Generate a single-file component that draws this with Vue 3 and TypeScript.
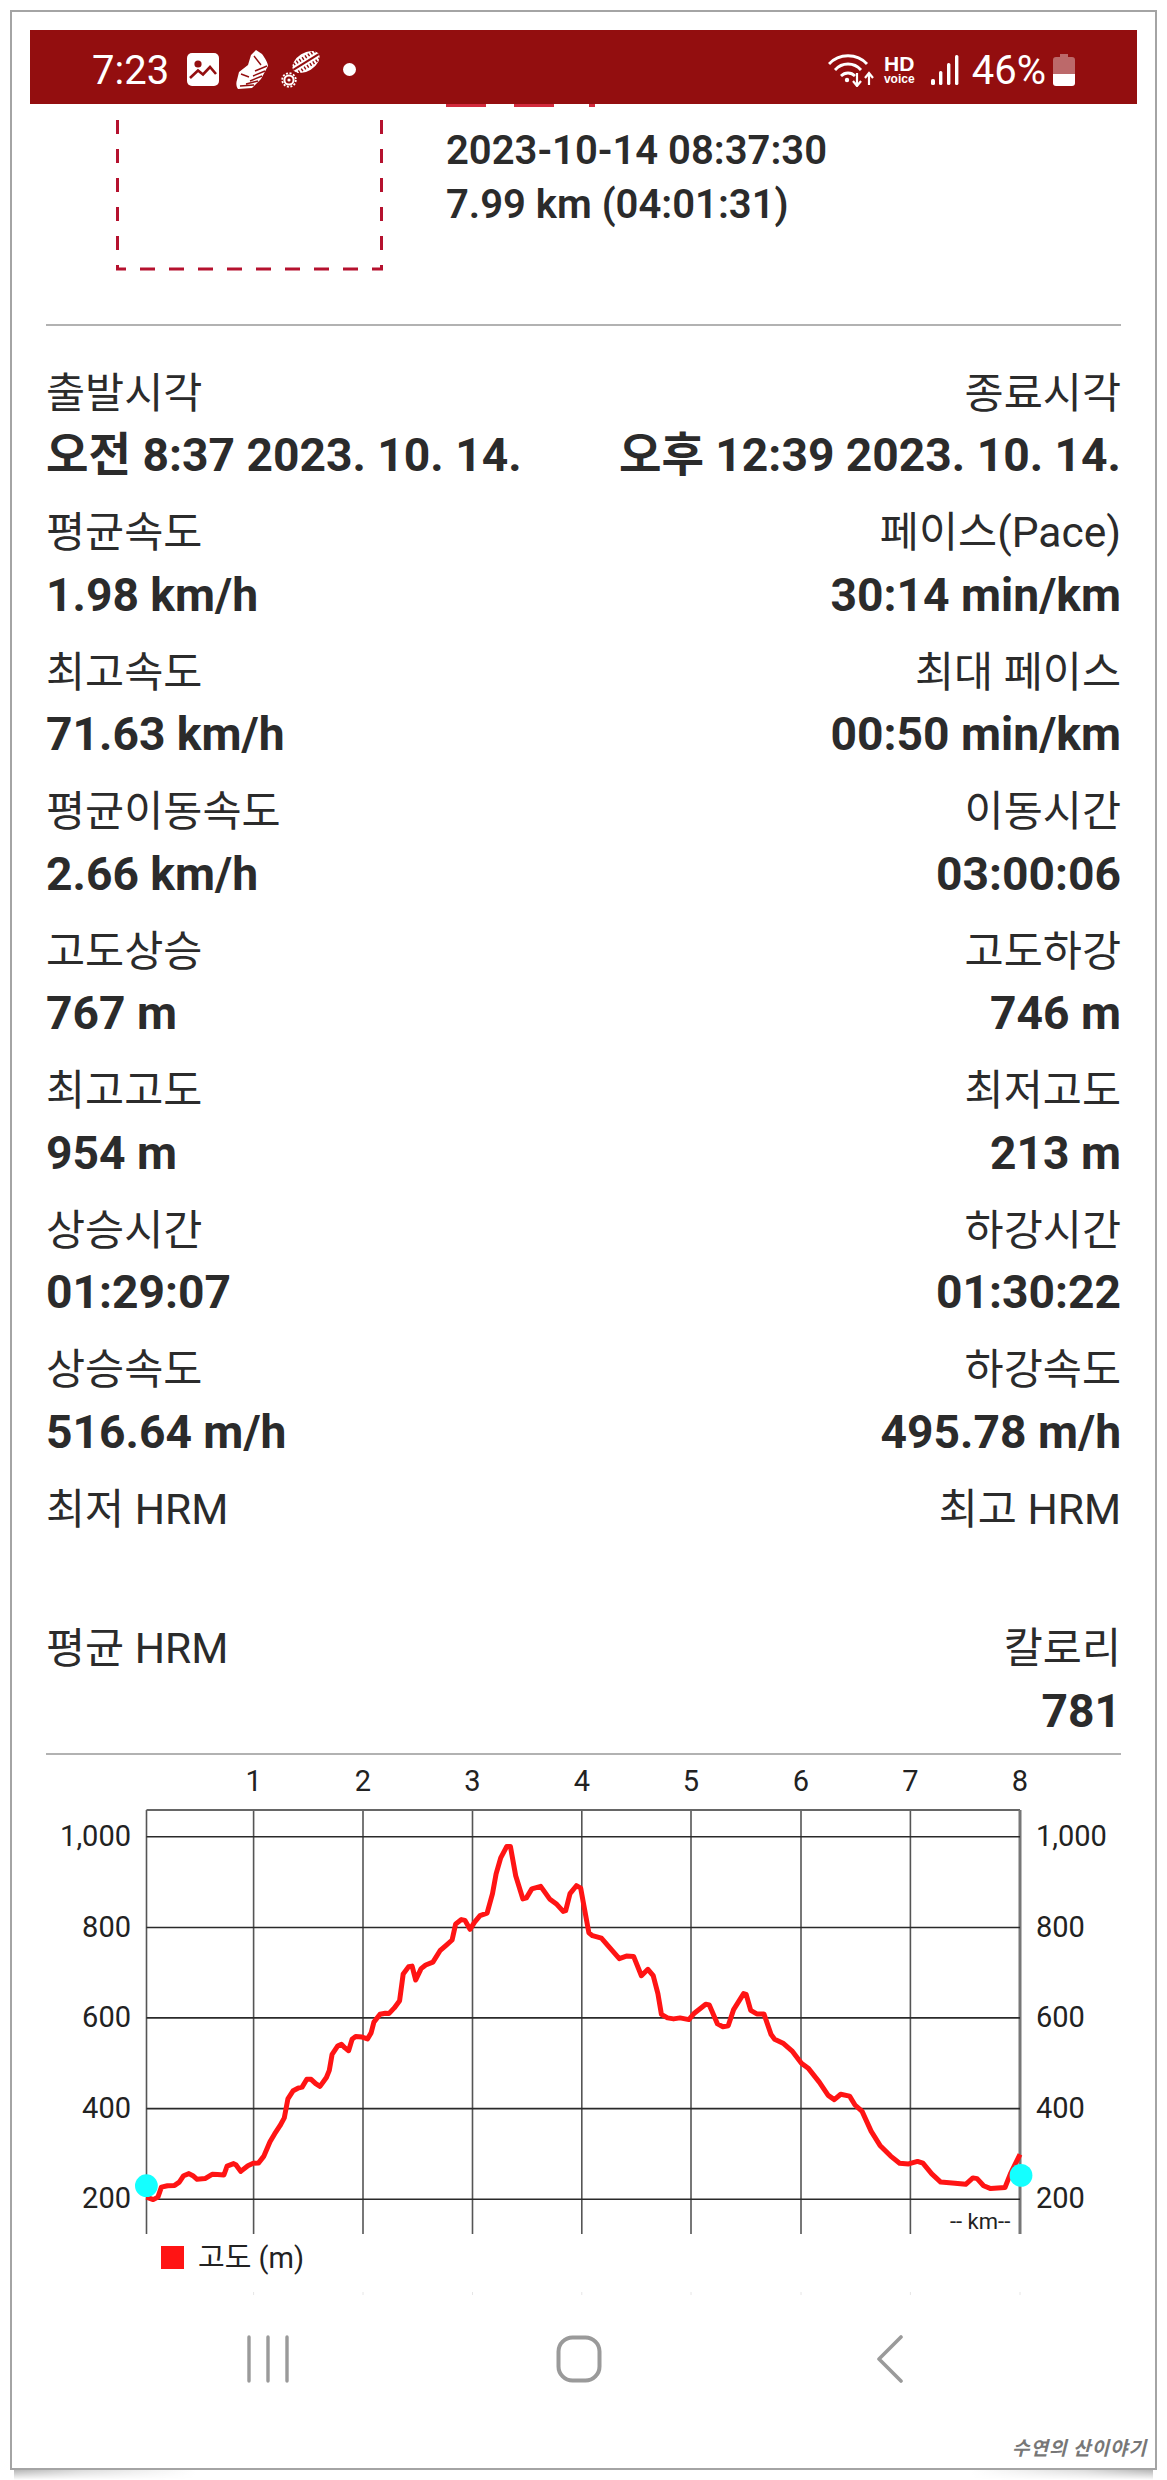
<script setup lang="ts">
type Stat = { label: string; value?: string }

const rows: [Stat, Stat][] = [
  [{ label: '출발시각', value: '오전 8:37 2023. 10. 14.' }, { label: '종료시각', value: '오후 12:39 2023. 10. 14.' }],
  [{ label: '평균속도', value: '1.98 km/h' }, { label: '페이스(Pace)', value: '30:14 min/km' }],
  [{ label: '최고속도', value: '71.63 km/h' }, { label: '최대 페이스', value: '00:50 min/km' }],
  [{ label: '평균이동속도', value: '2.66 km/h' }, { label: '이동시간', value: '03:00:06' }],
  [{ label: '고도상승', value: '767 m' }, { label: '고도하강', value: '746 m' }],
  [{ label: '최고고도', value: '954 m' }, { label: '최저고도', value: '213 m' }],
  [{ label: '상승시간', value: '01:29:07' }, { label: '하강시간', value: '01:30:22' }],
  [{ label: '상승속도', value: '516.64 m/h' }, { label: '하강속도', value: '495.78 m/h' }],
  [{ label: '최저 HRM' }, { label: '최고 HRM' }],
  [{ label: '평균 HRM' }, { label: '칼로리', value: '781' }],
]

// chart geometry in page pixels
const plot = { left: 146.5, right: 1020, top: 1810, bottom: 2234 }
const kmLines = [253.6, 363, 472.5, 581.8, 691, 801, 910.4, 1020]
const altLines = [
  { y: 1836.8, text: '1,000' },
  { y: 1927.5, text: '800' },
  { y: 2017.9, text: '600' },
  { y: 2108.6, text: '400' },
  { y: 2199.3, text: '200' },
]

// altitude trace, traced at 2.8x from two overlapping crops
const traceA: number[][] = [
  [326,1280],[345,1287],[358,1280],[368,1252],[385,1248],[405,1247],[418,1238],[430,1220],[445,1214],[456,1220],
  [468,1230],[490,1228],[510,1216],[525,1217],[543,1218],[552,1193],[570,1186],[577,1190],[590,1208],[610,1192],
  [625,1185],[640,1184],[655,1165],[672,1125],[685,1103],[700,1080],[712,1058],[722,1005],[737,982],[750,975],
  [762,972],[775,950],[787,950],[800,962],[812,970],[830,945],[838,925],[846,880],[862,856],[872,852],[882,862],
  [892,870],[902,838],[912,830],[930,832],[945,837],[955,820],[963,790],[980,768],[995,765],[1005,766],[1020,750],
  [1035,730],[1045,655],[1060,635],[1070,633],[1080,672],[1095,640],[1108,630],[1128,622],[1148,590],[1165,575],
  [1182,560],[1192,515],[1208,503],[1218,505],[1232,530],[1245,510],[1260,492],[1280,485],[1295,430],[1305,375],
  [1318,330],[1335,298],[1345,298],[1360,380],[1380,445],[1390,442],[1405,417],[1430,410],[1455,445],[1475,460],
  [1493,480],[1500,478],[1512,430],[1530,408],[1542,415],
]
const traceB: number[][] = [
  [25,540],[35,548],[60,555],[80,578],[110,612],[130,605],[150,606],[172,660],[190,642],[205,660],[218,710],[228,768],
  [245,778],[262,781],[280,778],[305,783],[320,765],[352,740],[362,742],[385,795],[400,803],[415,800],[430,755],
  [458,710],[465,712],[478,757],[495,767],[515,767],[535,825],[545,838],[570,850],[595,872],[620,905],[640,920],
  [670,958],[695,995],[712,1007],[730,992],[755,997],[770,1022],[790,1040],[815,1095],[840,1135],[870,1165],
  [895,1185],[920,1187],[945,1180],[960,1185],[985,1215],[1010,1238],[1050,1241],[1080,1244],[1100,1226],[1112,1228],
  [1130,1248],[1150,1256],[1190,1253],[1205,1215],[1232,1160],
]
const tracePoints = [
  ...traceA.map(([x, y]) => `${(30 + x / 2.8).toFixed(1)},${(1740 + y / 2.8).toFixed(1)}`),
  ...traceB.map(([x, y]) => `${(580 + x / 2.8).toFixed(1)},${(1740 + y / 2.8).toFixed(1)}`),
].join(' ')
</script>

<template>
  <div class="page">
    <div class="frame">
      <header class="status">
        <div class="status-left">
          <span class="clock">7:23</span>
          <svg class="ic-image" width="32" height="33" viewBox="0 0 32 33">
            <rect width="32" height="33" rx="5" fill="#fff" />
            <circle cx="11" cy="11" r="3.6" fill="#930e0f" />
            <path d="M3 25 L11 17.5 L16 21.5 L23 14 L29 21" fill="none" stroke="#930e0f" stroke-width="2.6" />
          </svg>
          <svg class="ic-shoe" width="33" height="39" viewBox="0 0 33 39">
            <path d="M16 5 L21 0 L27 4 C30 8 33 13 33 16 L26 29 L17 38 L3 39 C1 36 1 33 2 30 L4 22 L13 15 Z" fill="#fff" />
            <path d="M32 16 L20 21 M30 21 L18 26 M27 26 L15 31 M23 31 L11 34 M19 35 L5 36 M19 6 L26 15 M6 24 L14 27" stroke="#930e0f" stroke-width="1.4" fill="none" />
          </svg>
          <svg class="ic-trail" width="39" height="37" viewBox="0 0 39 37">
            <g transform="rotate(-32 25 11)">
              <ellipse cx="25" cy="11" rx="15" ry="9" fill="#fff" />
              <path d="M10 11 H40" stroke="#930e0f" stroke-width="2" />
              <path d="M10 6.4 H40 M10 15.6 H40" stroke="#930e0f" stroke-width="3.2" stroke-dasharray="1.4 2" />
            </g>
            <circle cx="8" cy="29" r="4.6" fill="none" stroke="#fff" stroke-width="2" />
            <circle cx="8" cy="29" r="6.8" fill="none" stroke="#fff" stroke-width="1.8" stroke-dasharray="2 1.6" />
            <circle cx="8" cy="29" r="1.6" fill="#fff" />
          </svg>
          <span class="dot"></span>
        </div>
        <div class="status-right">
          <svg class="ic-wifi" width="46" height="35" viewBox="0 0 46 35">
            <path d="M1 12 C11 1 29 1 39 12 M7 18 C14 10 26 10 33 18 M13 24 C17 20 23 20 27 24" fill="none" stroke="#fff" stroke-width="2.8" />
            <circle cx="19" cy="28" r="2.2" fill="#fff" />
            <path d="M29 21 V34 M25 29 L29 34 L33 29 M41 33 V22 M37 26 L41 21 L45 26" fill="none" stroke="#fff" stroke-width="2.2" />
          </svg>
          <div class="hd"><span class="hd-big">HD</span><span class="hd-small">voice</span></div>
          <svg class="ic-signal" width="28" height="30" viewBox="0 0 28 30">
            <rect x="0" y="24" width="4" height="6" rx="1.6" fill="#fff" />
            <rect x="8" y="16" width="3.4" height="14" rx="1.5" fill="#fff" />
            <rect x="16" y="8" width="3.4" height="22" rx="1.5" fill="#fff" />
            <rect x="24" y="0" width="3.4" height="30" rx="1.5" fill="#fff" />
          </svg>
          <span class="battery-text">46%</span>
          <svg class="ic-battery" width="22" height="32" viewBox="0 0 22 32">
            <path d="M7 0 H15 V3 H19 Q22 3 22 6 V20 H0 V6 Q0 3 3 3 H7 Z" fill="#fff" opacity=".38" />
            <path d="M0 20 H22 V29 Q22 32 19 32 H3 Q0 32 0 29 Z" fill="#fff" />
          </svg>
        </div>
      </header>

      <section class="head">
        <svg class="thumb" width="267" height="167" viewBox="0 0 267 167">
          <path
            d="M1.5 2 V166 M265.5 2 V166"
            fill="none"
            stroke="#b5112e"
            stroke-width="3"
            stroke-dasharray="14 15"
            stroke-dashoffset="-14"
          />
          <path d="M0 165 H267" fill="none" stroke="#b5112e" stroke-width="3" stroke-dasharray="15 14" stroke-dashoffset="5" />
        </svg>
        <div class="head-info">
          <div class="title-clip"><i class="w40"></i><i class="w40"></i><i class="w6"></i></div>
          <div class="info-line">2023-10-14 08:37:30</div>
          <div class="info-line">7.99 km (04:01:31)</div>
        </div>
      </section>

      <hr class="rule" />

      <section class="stats">
        <template v-for="(row, i) in rows" :key="i">
          <div v-for="(cell, side) in row" :key="side" class="cell" :class="{ right: side === 1 }">
            <div class="label">{{ cell.label }}</div>
            <div class="value">{{ cell.value }}</div>
          </div>
        </template>
      </section>

      <hr class="rule rule-2" />

      <svg class="chart" width="1143" height="545" viewBox="12 1755 1143 545">
        <g class="grid-v">
          <line :x1="plot.left" :y1="plot.top" :x2="plot.left" :y2="plot.bottom" />
          <line v-for="x in kmLines" :key="x" :x1="x" :y1="plot.top" :x2="x" :y2="plot.bottom" />
        </g>
        <line class="grid-top" :x1="plot.left" :y1="plot.top" :x2="plot.right" :y2="plot.top" />
        <line class="grid-end" :x1="plot.right" :y1="plot.top" :x2="plot.right" :y2="plot.bottom" />
        <line
          v-for="a in altLines"
          :key="a.y"
          class="grid-h"
          :x1="plot.left"
          :y1="a.y"
          :x2="plot.right"
          :y2="a.y"
        />
        <g class="axis">
          <text v-for="(x, i) in kmLines" :key="x" :x="x" y="1791" text-anchor="middle">{{ i + 1 }}</text>
          <text v-for="a in altLines" :key="a.text" x="131" :y="a.y + 9" text-anchor="end">{{ a.text }}</text>
          <text v-for="a in altLines" :key="a.text + 'r'" x="1036" :y="a.y + 9">{{ a.text }}</text>
          <text x="198" y="2268">고도 (m)</text>
        </g>
        <text class="km" x="950" y="2229">-- km--</text>
        <polyline class="trace" :points="tracePoints" />
        <circle cx="146.4" cy="2185.7" r="11.4" fill="#14ffff" />
        <circle cx="1021" cy="2175.4" r="11.4" fill="#14ffff" />
        <rect x="161" y="2246" width="23" height="23" fill="#ff1414" />
        <g class="ticks">
          <line v-for="x in kmLines" :key="x" :x1="x" y1="2292" :x2="x" y2="2295" />
        </g>
      </svg>

      <nav class="nav">
        <svg width="44" height="48" viewBox="0 0 44 48">
          <path d="M3 2 V46 M22 2 V46 M41 2 V46" fill="none" stroke="#9a9a9a" stroke-width="3.4" stroke-linecap="round" />
        </svg>
        <svg width="46" height="48" viewBox="0 0 46 48">
          <rect x="2.5" y="2.5" width="41" height="43" rx="14" fill="none" stroke="#9a9a9a" stroke-width="4" />
        </svg>
        <svg width="28" height="48" viewBox="0 0 28 48">
          <path d="M25 2 L3 24 L25 46" fill="none" stroke="#9a9a9a" stroke-width="3.6" stroke-linecap="round" stroke-linejoin="round" />
        </svg>
      </nav>

      <div class="mark">수연의 산이야기</div>
    </div>
    <div class="curl"></div>
  </div>
</template>

<style>
body {
  background: #fff;
}
</style>

<style scoped>
.page {
  width: 1167px;
  height: 2480px;
  padding: 10px 10px 0;
  box-sizing: border-box;
  position: relative;
  overflow: hidden;
  font-family: Roboto, "Noto Sans CJK KR", sans-serif;
  color: #2b2b2b;
}
.frame {
  width: 1147px;
  height: 2460px;
  box-sizing: border-box;
  border: 2px solid #a4a4a4;
  background: #fff;
  position: relative;
  display: flex;
  flex-direction: column;
}
.curl {
  height: 10px;
  margin: 0 4px;
  background: linear-gradient(to right, #b5b5b5, #dcdcdc 6%, #fff 16%, #fff 84%, #dcdcdc 94%, #b5b5b5);
  -webkit-mask-image: linear-gradient(to bottom, #000, transparent);
  mask-image: linear-gradient(to bottom, #000, transparent);
}

.status {
  margin: 18px 18px 0;
  height: 74px;
  box-sizing: border-box;
  background: #930e0f;
  padding: 5px 62px 0;
  display: flex;
  align-items: center;
  justify-content: space-between;
  color: #fff;
  position: relative;
  z-index: 1;
}
.status-left,
.status-right {
  display: flex;
  align-items: center;
}
.clock,
.battery-text {
  font-size: 40px;
  font-weight: 400;
  line-height: 40px;
  position: relative;
  top: 1px;
}
.ic-image {
  margin-left: 18px;
}
.ic-shoe {
  margin-left: 16px;
}
.ic-trail {
  margin-left: 13px;
}
.dot {
  width: 13px;
  height: 13px;
  border-radius: 50%;
  background: #fff;
  margin-left: 23px;
}
.hd {
  margin-left: 9px;
  width: 33px;
  display: flex;
  flex-direction: column;
  align-items: center;
  font-family: "Liberation Sans", sans-serif;
  font-weight: 700;
}
.hd-big {
  font-size: 21px;
  line-height: 18px;
}
.hd-small {
  font-size: 12px;
  line-height: 12px;
}
.ic-signal {
  margin-left: 15px;
}
.battery-text {
  margin-left: 13px;
}
.ic-battery {
  margin-left: 7px;
}

.head {
  height: 220px;
  padding-left: 104px;
  display: flex;
  align-items: flex-start;
}
.thumb {
  display: block;
}
.head-info {
  margin-left: 63px;
}
.title-clip {
  height: 3px;
  display: flex;
  gap: 28px;
}
.title-clip i {
  display: block;
  background: #d22a3c;
  height: 2.5px;
}
.title-clip .w40 {
  width: 40px;
}
.title-clip .w6 {
  width: 6px;
  margin-left: 7px;
}
.info-line {
  font-size: 40px;
  font-weight: 600;
  line-height: 54.5px;
  white-space: nowrap;
}
.title-clip + .info-line {
  margin-top: 16.5px;
}

.rule {
  margin: 0 34px;
  border: 0;
  height: 2px;
  background: #b2b2b2;
  flex: none;
}
.rule-2 {
  margin-top: 11px;
}
.stats {
  padding: 36.5px 34px 0;
  display: grid;
  grid-template-columns: 1fr 1fr;
  row-gap: 15.5px;
}
.cell.right {
  text-align: right;
}
.label,
.value {
  height: 62px;
  line-height: 62px;
  white-space: nowrap;
}
.label {
  font-size: 42.5px;
}
.value {
  font-size: 46.2px;
  font-weight: 700;
  position: relative;
  top: -0.5px;
}

.chart {
  display: block;
  flex: none;
}
.grid-v line {
  stroke: #555;
  stroke-width: 1.6;
}
.grid-top {
  stroke: #666;
  stroke-width: 2;
}
.grid-end {
  stroke: #777;
  stroke-width: 3;
}
.grid-h {
  stroke: #2a2a2a;
  stroke-width: 1.6;
}
.axis text {
  font-size: 29px;
  fill: #222;
}
.km {
  font-size: 22px;
  fill: #222;
}
.trace {
  fill: none;
  stroke: #ff1414;
  stroke-width: 5;
  stroke-linejoin: round;
}
.ticks line {
  stroke: #e6e6e6;
  stroke-width: 1;
}

.nav {
  margin-top: 34.5px;
  padding-left: 100px;
  width: 933px;
  display: grid;
  grid-template-columns: repeat(3, 311px);
  justify-items: center;
}
.mark {
  position: absolute;
  right: 8px;
  bottom: 8px;
  font-size: 19px;
  font-weight: 700;
  font-style: italic;
  letter-spacing: 1px;
  color: #777;
  white-space: pre;
}
</style>
